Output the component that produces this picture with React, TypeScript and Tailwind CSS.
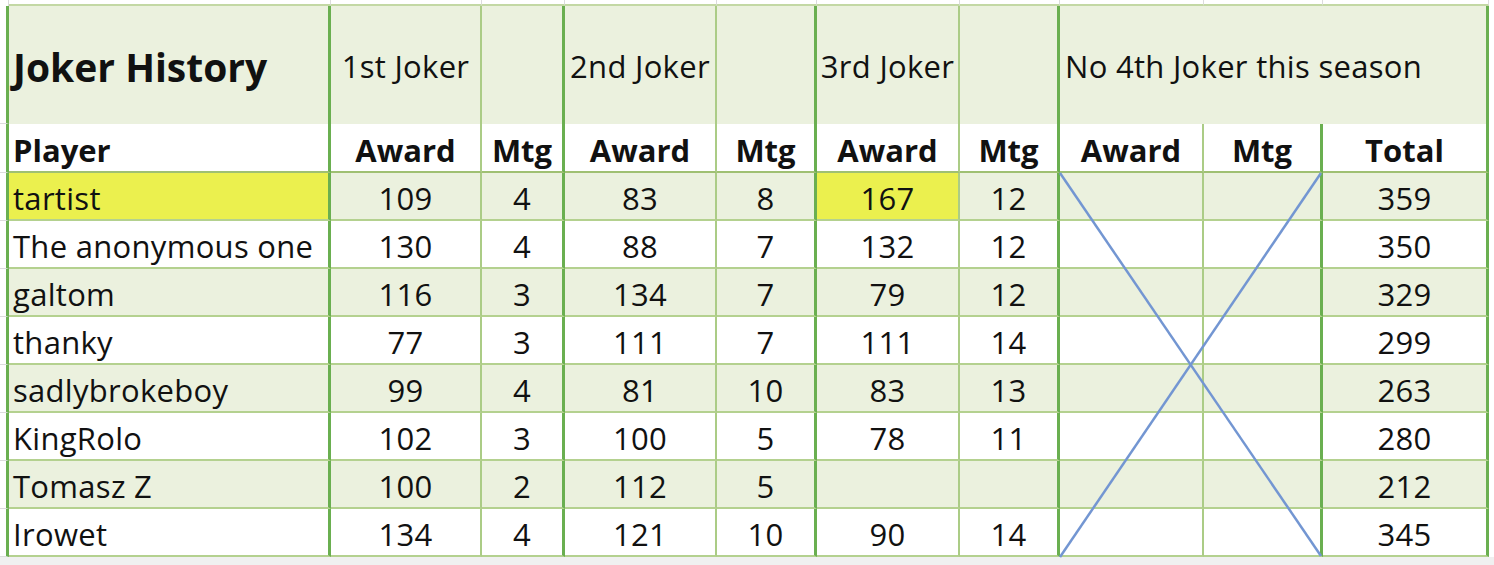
const rows: (string | number)[][] = [
  ["tartist", 109, 4, 83, 8, 167, 12, 359],
  ["The anonymous one", 130, 4, 88, 7, 132, 12, 350],
  ["galtom", 116, 3, 134, 7, 79, 12, 329],
  ["thanky", 77, 3, 111, 7, 111, 14, 299],
  ["sadlybrokeboy", 99, 4, 81, 10, 83, 13, 263],
  ["KingRolo", 102, 3, 100, 5, 78, 11, 280],
  ["Tomasz Z", 100, 2, 112, 5, "", "", 212],
  ["Irowet", 134, 4, 121, 10, 90, 14, 345],
];

const thick = "border-r-[3px] border-r-[#6aaf50]";
const thin = "border-r-2 border-r-[#abcc86]";

// right border of each table column: Player, Award, Mtg, Award, Mtg, Award, Mtg, Award, Mtg, Total
const colLines = [thick, thin, thick, thin, thick, thin, thick, thin, thick, thick];

export default function App() {
  return (
    <div className="w-[1494px] h-[565px] bg-white overflow-hidden text-[#111] [font-family:'Open_Sans',Lato,sans-serif]">
      <div className="relative grid grid-cols-[9px_322px_151px_83px_152px_100px_143px_100px_144px_119px_166px_5px] grid-rows-[6px_118px_49px_repeat(8,48px)_8px]">
        {/* top strip */}
        <div className="border-r border-r-[#dcdcdc]" />
        {colLines.map((_, i) => (
          <div key={"t" + i} className="border-b-2 border-b-[#c3d8a4] border-r border-r-[#dcdcdc]" />
        ))}
        <div />

        {/* header row 1 */}
        <div className={thick + " border-b border-b-[#dcdcdc]"} />
        <div className={"bg-[#ebf1de] flex items-center pl-[4px] pt-[2px] " + colLines[0]}>
          <span className="text-[39px] font-bold leading-none">Joker History</span>
        </div>
        <div className={"bg-[#ebf1de] flex items-center justify-center pt-[2px] " + colLines[1]}>
          <span className="text-[31px] leading-none whitespace-nowrap tracking-[0.3px]">1st Joker</span>
        </div>
        <div className={"bg-[#ebf1de] " + colLines[2]} />
        <div className={"bg-[#ebf1de] flex items-center justify-center pt-[2px] " + colLines[3]}>
          <span className="text-[31px] leading-none whitespace-nowrap tracking-[0.3px]">2nd Joker</span>
        </div>
        <div className={"bg-[#ebf1de] " + colLines[4]} />
        <div className={"bg-[#ebf1de] flex items-center justify-center pt-[2px] " + colLines[5]}>
          <span className="text-[31px] leading-none whitespace-nowrap tracking-[0.3px]">3rd Joker</span>
        </div>
        <div className={"bg-[#ebf1de] " + colLines[6]} />
        <div className={"col-span-3 bg-[#ebf1de] flex items-center pl-[5px] pt-[2px] " + thick}>
          <span className="text-[31px] leading-none whitespace-nowrap tracking-[0.3px]">No 4th Joker this season</span>
        </div>
        <div />

        {/* header row 2 */}
        <div className={thick + " border-b border-b-[#dcdcdc]"} />
        {["Player", "Award", "Mtg", "Award", "Mtg", "Award", "Mtg", "Award", "Mtg", "Total"].map((h, i) => (
          <div
            key={"h" + i}
            className={
              "bg-white flex items-end pb-[5px] border-b-2 border-b-[#9fc072] " +
              (i === 0 ? "pl-[4px] " : "justify-center ") +
              colLines[i]
            }
          >
            <span className="text-[31px] font-bold leading-none">{h}</span>
          </div>
        ))}
        <div />

        {/* data rows */}
        {rows.map((r, ri) => {
          const bg = ri % 2 === 0 ? "bg-[#ebf1de]" : "bg-white";
          const cells = [r[0], r[1], r[2], r[3], r[4], r[5], r[6], "", "", r[7]];
          return [
            <div key={"m" + ri} className={thick + " border-b border-b-[#dcdcdc]"} />,
            ...cells.map((c, ci) => {
              const yellow = ri === 0 && (ci === 0 || ci === 5);
              return (
                <div
                  key={ri + "-" + ci}
                  className={
                    "flex items-end pb-[5px] border-b-2 border-b-[#b4d18f] " +
                    (yellow ? "bg-[#ebf04e] " : bg + " ") +
                    (ci === 0 ? "pl-[4px] " : "justify-center ") +
                    colLines[ci]
                  }
                >
                  <span className="text-[31px] leading-none whitespace-nowrap tracking-[0.3px]">{c}</span>
                </div>
              );
            }),
            <div key={"e" + ri} />,
          ];
        })}

        {/* bottom strip */}
        <div className="col-span-12 bg-[#f0f0f0]" />

        {/* cross over the empty 4th joker columns */}
        <svg
          className="absolute left-[1058px] top-[172px] pointer-events-none"
          width="265"
          height="386"
          viewBox="0 0 265 386"
        >
          <line x1="2" y1="1" x2="263" y2="384" stroke="#7396d2" strokeWidth="2.5" />
          <line x1="263" y1="1" x2="2" y2="385" stroke="#7396d2" strokeWidth="2.5" />
        </svg>
      </div>
    </div>
  );
}
